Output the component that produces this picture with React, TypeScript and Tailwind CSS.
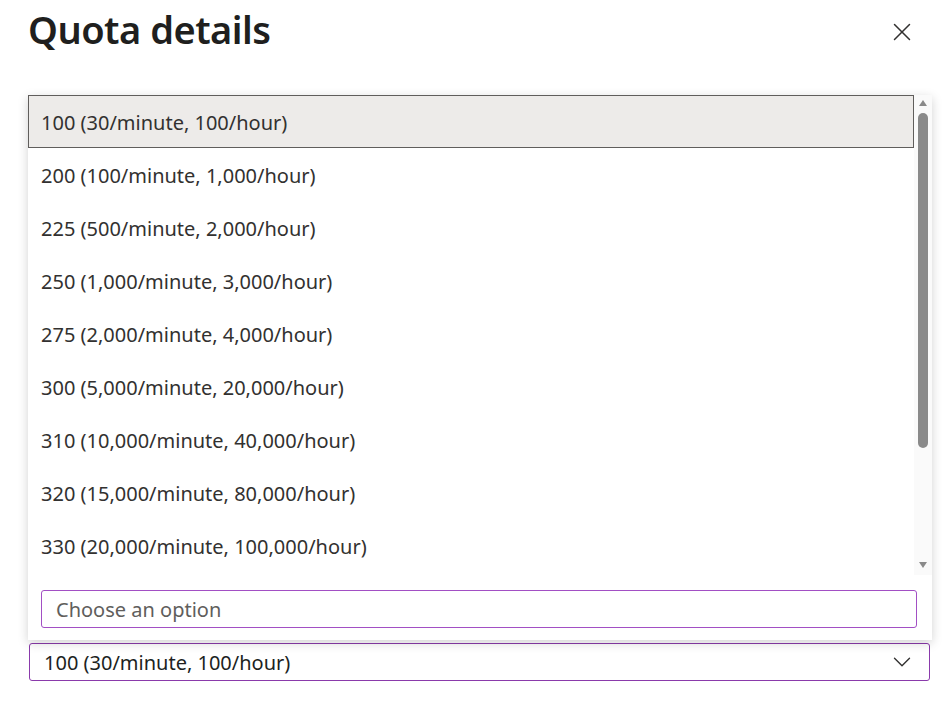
import { X, ChevronDown } from "lucide-react";

const options = [
  "100 (30/minute, 100/hour)",
  "200 (100/minute, 1,000/hour)",
  "225 (500/minute, 2,000/hour)",
  "250 (1,000/minute, 3,000/hour)",
  "275 (2,000/minute, 4,000/hour)",
  "300 (5,000/minute, 20,000/hour)",
  "310 (10,000/minute, 40,000/hour)",
  "320 (15,000/minute, 80,000/hour)",
  "330 (20,000/minute, 100,000/hour)",
];

export default function App() {
  return (
    <div className="relative w-[945px] h-[701px] bg-white overflow-hidden font-['Noto_Sans',sans-serif] text-[#323130]">
      {/* Header */}
      <div className="flex items-start justify-between pl-[28px] pr-[28px] pt-[2px]">
        <h1 className="text-[38px] font-semibold leading-[54px] tracking-[-0.5px] text-[#201f1e]">
          Quota details
        </h1>
        <button className="mt-[15px] text-[#323130]">
          <X className="w-[30px] h-[30px]" strokeWidth={1.2} />
        </button>
      </div>

      {/* Combobox field */}
      <div className="mt-[587px] ml-[29px] w-[901px] h-[38px] flex items-center justify-between border border-[#8a3aab] rounded-[3px] pl-[14px] pr-[12px]">
        <span className="text-[20px] leading-[28px] pt-[2px] text-[#201f1e]">100 (30/minute, 100/hour)</span>
        <ChevronDown className="w-[30px] h-[30px] text-[#323130]" strokeWidth={1.1} />
      </div>

      {/* Dropdown popup */}
      <div className="absolute left-[28px] top-[95px] w-[904px] h-[545px] bg-white shadow-[0_3px_10px_rgba(0,0,0,0.18)] flex flex-col">
        <div className="flex h-[480px]">
          <div className="flex flex-col w-[886px]">
            {options.map((o, i) => (
              <div
                key={o}
                className={`h-[53px] flex items-center pl-[12px] pt-[3px] text-[20px] ${
                  i === 0 ? "bg-[#edebe9] border border-[#605e5c]" : "border border-transparent"
                }`}
              >
                {o}
              </div>
            ))}
          </div>
          {/* Scrollbar */}
          <div className="w-[18px] bg-[#fafafa] flex flex-col items-center pt-[5px] pb-[7px]">
            <div className="w-0 h-0 border-l-[4px] border-r-[4px] border-b-[6px] border-l-transparent border-r-transparent border-b-[#8a8a8a]" />
            <div className="mt-[7px] w-[10px] h-[335px] rounded-full bg-[#8a8a8a]" />
            <div className="flex-1" />
            <div className="w-0 h-0 border-l-[4px] border-r-[4px] border-t-[6px] border-l-transparent border-r-transparent border-t-[#8a8a8a]" />
          </div>
        </div>
        <div className="mt-[15px] ml-[13px] w-[876px] h-[38px] border border-[#a24fc4] rounded-[3px] flex items-center pl-[14px]">
          <span className="text-[20px] leading-[28px] pt-[1px] text-[#605e5c]">Choose an option</span>
        </div>
      </div>
    </div>
  );
}
